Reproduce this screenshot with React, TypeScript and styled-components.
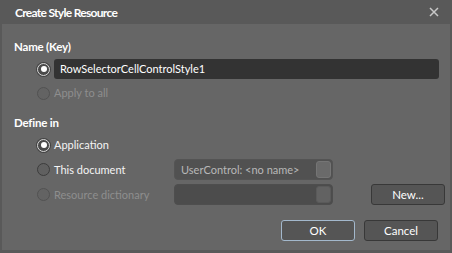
import React from "react";
import styled, { createGlobalStyle, css } from "styled-components";

const GlobalStyle = createGlobalStyle`
  html, body {
    margin: 0;
    padding: 0;
    background: #595959;
  }
  body {
    font-family: Lato, "Open Sans", sans-serif;
    font-size: 11px;
    color: #f2f2f2;
  }
`;

const Window = styled.div`
  width: 452px;
  height: 253px;
  box-sizing: border-box;
  background: #595959;
  padding: 0 2px 3px 2px;
  display: flex;
  flex-direction: column;
`;

const TitleBar = styled.div`
  height: 24px;
  flex: none;
  display: flex;
  align-items: center;
  justify-content: space-between;
  padding: 0 8px 0 13px;
`;

const Title = styled.span`
  font-weight: 700;
  font-size: 12px;
  letter-spacing: -0.7px;
  color: #ffffff;
`;

const CloseButton = styled.button`
  width: 16px;
  height: 16px;
  border: none;
  padding: 0;
  background: transparent;
  display: flex;
  align-items: center;
  justify-content: center;
`;

const Body = styled.div`
  flex: 1;
  background: #666666;
  padding: 15px 11px 0 12px;
  display: flex;
  flex-direction: column;
`;

const SectionLabel = styled.div<{ $top?: number }>`
  height: 16px;
  line-height: 16px;
  font-weight: 700;
  font-size: 11.5px;
  letter-spacing: -0.2px;
  color: #ffffff;
  margin-top: ${(p) => p.$top ?? 0}px;
`;

const Options = styled.div`
  display: grid;
  grid-template-columns: 13px 116px 159px 30px 74px;
  column-gap: 4px;
  row-gap: 4px;
  padding-left: 23px;
  margin-top: 4px;
  align-items: center;
`;

const NameRow = styled.div`
  display: grid;
  grid-template-columns: 13px 1fr;
  column-gap: 4px;
  row-gap: 4px;
  padding-left: 23px;
  margin-top: 4px;
  align-items: center;
`;

const Radio = styled.span<{ $checked?: boolean; $disabled?: boolean }>`
  width: 13px;
  height: 13px;
  box-sizing: border-box;
  border-radius: 50%;
  border: 1px solid #3c3c3c;
  background: #606060;
  position: relative;
  ${(p) =>
    p.$checked &&
    css`
      border: 1.5px solid #d8d8d8;
      background: #4a4a4a;
      box-shadow: 0 0 0 1px #444;
      &::after {
        content: "";
        position: absolute;
        left: 50%;
        top: 50%;
        width: 6px;
        height: 6px;
        margin: -3px 0 0 -3px;
        border-radius: 50%;
        background: #ffffff;
      }
    `}
  ${(p) =>
    p.$disabled &&
    css`
      border-color: #525252;
      background: #636363;
    `}
`;

const OptionText = styled.span<{ $disabled?: boolean }>`
  color: ${(p) => (p.$disabled ? "#8e8e8e" : "#f4f4f4")};
  white-space: nowrap;
  line-height: 20px;
`;

const KeyInput = styled.div`
  height: 20px;
  line-height: 20px;
  background: #333333;
  border-radius: 3px;
  padding-left: 6px;
  color: #ffffff;
  white-space: nowrap;
`;

const Combo = styled.div<{ $disabled?: boolean }>`
  height: 21px;
  box-sizing: border-box;
  border: 1px solid ${(p) => (p.$disabled ? "#4e4e4e" : "#545454")};
  background: ${(p) => (p.$disabled ? "#4c4c4c" : "#515151")};
  border-radius: 4px;
  display: flex;
  align-items: center;
  justify-content: space-between;
  padding: 0 1px 0 6px;
  color: #b8b8b8;
  white-space: nowrap;
`;

const ComboArrow = styled.span<{ $disabled?: boolean }>`
  width: 15px;
  height: 17px;
  box-sizing: border-box;
  border-radius: 3px;
  background: ${(p) => (p.$disabled ? "#626262" : "#6a6a6a")};
  border: 1px solid ${(p) => (p.$disabled ? "#5a5a5a" : "#757575")};
`;

const Button = styled.button<{ $default?: boolean }>`
  width: 74px;
  height: 21px;
  box-sizing: border-box;
  border-radius: 3px;
  background: #555555;
  border: 1px solid ${(p) => (p.$default ? "#a3b8cc" : "#383838")};
  color: #ffffff;
  font-family: inherit;
  font-size: 11.5px;
  padding: 0;
`;

const Footer = styled.div`
  display: flex;
  justify-content: flex-end;
  gap: 9px;
  margin-top: 15px;
  padding-right: 1px;
`;

const Spacer = styled.span``;

export default function App() {
  return (
    <>
      <GlobalStyle />
      <Window>
        <TitleBar>
          <Title>Create Style Resource</Title>
          <CloseButton aria-label="Close">
            <svg width="10" height="10" viewBox="0 0 10 10">
              <path d="M1 1L9 9M9 1L1 9" stroke="#c8c8c8" strokeWidth="1.5" />
            </svg>
          </CloseButton>
        </TitleBar>
        <Body>
          <SectionLabel>Name (Key)</SectionLabel>
          <NameRow>
            <Radio $checked />
            <KeyInput>RowSelectorCellControlStyle1</KeyInput>
            <Radio $disabled />
            <OptionText $disabled>Apply to all</OptionText>
          </NameRow>
          <SectionLabel $top={12}>Define in</SectionLabel>
          <Options>
            <Radio $checked />
            <OptionText>Application</OptionText>
            <Spacer />
            <Spacer />
            <Spacer />
            <Radio />
            <OptionText>This document</OptionText>
            <Combo>
              <span>UserControl: &lt;no name&gt;</span>
              <ComboArrow />
            </Combo>
            <Spacer />
            <Spacer />
            <Radio $disabled />
            <OptionText $disabled>Resource dictionary</OptionText>
            <Combo $disabled>
              <span />
              <ComboArrow $disabled />
            </Combo>
            <Spacer />
            <Button>New...</Button>
          </Options>
          <Footer>
            <Button $default>OK</Button>
            <Button>Cancel</Button>
          </Footer>
        </Body>
      </Window>
    </>
  );
}
